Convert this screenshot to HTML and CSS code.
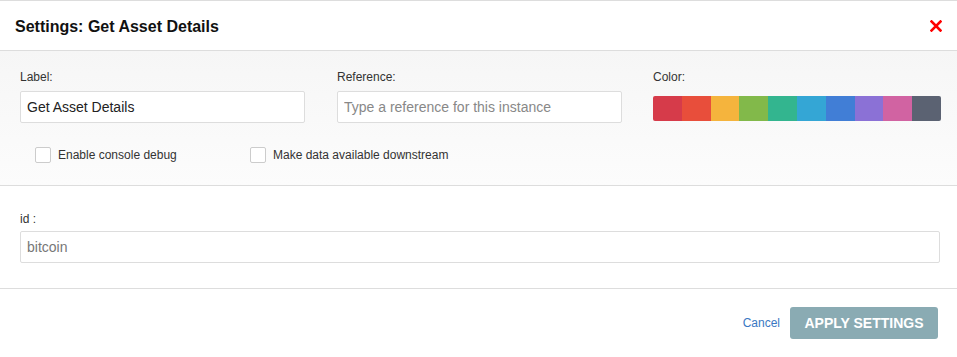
FILE: index.html
```html
<!DOCTYPE html>
<html lang="en">
<head>
    <meta charset="UTF-8">
    <title>Settings: Get Asset Details</title>
    <link rel="stylesheet" href="styles.css">
</head>
<body>
    <div class="modal">
        <div class="modal-header">
            <h2>Settings: Get Asset Details</h2>
            <button class="close" aria-label="Close">
                <svg width="12" height="12" viewBox="0 0 12 12"><path d="M1.5 1.5 L10.5 10.5 M10.5 1.5 L1.5 10.5" stroke="#f00" stroke-width="2.6" stroke-linecap="square"/></svg>
            </button>
        </div>

        <div class="settings-panel">
            <div class="field-row">
                <div class="field">
                    <label>Label:</label>
                    <input type="text" class="text-input" value="Get Asset Details">
                </div>
                <div class="field">
                    <label>Reference:</label>
                    <input type="text" class="text-input" placeholder="Type a reference for this instance">
                </div>
                <div class="field">
                    <label>Color:</label>
                    <div class="swatches">
                        <span style="background:#d63b4a"></span>
                        <span style="background:#e84e3b"></span>
                        <span style="background:#f5b43d"></span>
                        <span style="background:#82b94a"></span>
                        <span style="background:#33b58f"></span>
                        <span style="background:#34a6d5"></span>
                        <span style="background:#417ed6"></span>
                        <span style="background:#8b71d6"></span>
                        <span style="background:#d163a2"></span>
                        <span style="background:#5b6272"></span>
                    </div>
                </div>
            </div>
            <div class="check-row">
                <label class="check"><span class="box"></span>Enable console debug</label>
                <label class="check"><span class="box"></span>Make data available downstream</label>
            </div>
        </div>

        <div class="params">
            <label>id :</label>
            <input type="text" class="text-input muted" value="bitcoin">
        </div>

        <div class="modal-footer">
            <a href="#" class="cancel">Cancel</a>
            <button class="btn-apply">APPLY SETTINGS</button>
        </div>
    </div>
</body>
</html>
```

FILE: styles.css
```css
body {
    margin: 0;
    font-family: 'Liberation Sans', Arial, Helvetica, sans-serif;
    background: #fff;
    color: #333;
}

.modal {
    width: 957px;
    height: 357px;
    border-top: 1px solid #ddd;
    box-sizing: border-box;
}

.modal-header {
    height: 49px;
    display: flex;
    align-items: center;
    justify-content: space-between;
    padding: 0 15px;
    border-bottom: 1px solid #ddd;
}

.modal-header h2 {
    margin: 0;
    font-size: 16px;
    font-weight: bold;
    color: #111;
    padding-top: 2px;
}

.close {
    border: none;
    background: none;
    padding: 0;
    display: flex;
    cursor: pointer;
}

.settings-panel {
    height: 135px;
    box-sizing: border-box;
    padding: 19px 17px 0 20px;
    background: linear-gradient(#f6f6f6, #fcfcfc);
    border-bottom: 1px solid #ddd;
}

.field-row {
    display: grid;
    grid-template-columns: 285px 285px 287px;
    column-gap: 32px;
}

.field-row .field:last-child {
    margin-left: -1px;
}

label {
    display: block;
    font-size: 12px;
    line-height: 14px;
    color: #333;
    margin-bottom: 7px;
}

.text-input {
    display: block;
    width: 100%;
    height: 32px;
    box-sizing: border-box;
    border: 1px solid #ddd;
    border-radius: 2px;
    padding: 0 6px;
    font-family: inherit;
    font-size: 14px;
    color: #222;
    background: #fff;
    outline: none;
}

.text-input::placeholder {
    color: #888;
}

.text-input.muted {
    color: #777;
}

.swatches {
    display: flex;
    height: 25px;
    margin-top: 12px;
    border-radius: 2px;
    overflow: hidden;
}

.swatches span {
    flex: 1;
}

.check-row {
    display: flex;
    padding-left: 15px;
    margin-top: 24px;
}

.check {
    display: flex;
    align-items: center;
    width: 215px;
    margin: 0;
    font-size: 12px;
    color: #333;
}

.box {
    width: 14px;
    height: 14px;
    border: 1px solid #ccc;
    border-radius: 2px;
    background: #fff;
    margin-right: 7px;
}

.params {
    height: 103px;
    box-sizing: border-box;
    padding: 26px 17px 0 20px;
    border-bottom: 1px solid #ddd;
}

.params label {
    margin-bottom: 5px;
}

.modal-footer {
    display: flex;
    justify-content: flex-end;
    align-items: center;
    padding: 18px 19px 0 0;
    gap: 10px;
}

.cancel {
    font-size: 12px;
    color: #3a78c3;
    text-decoration: none;
}

.btn-apply {
    height: 32px;
    width: 148px;
    border: none;
    border-radius: 3px;
    background: #8aabb3;
    color: #fff;
    font-family: inherit;
    font-size: 14px;
    font-weight: bold;
    padding: 0;
}
```
